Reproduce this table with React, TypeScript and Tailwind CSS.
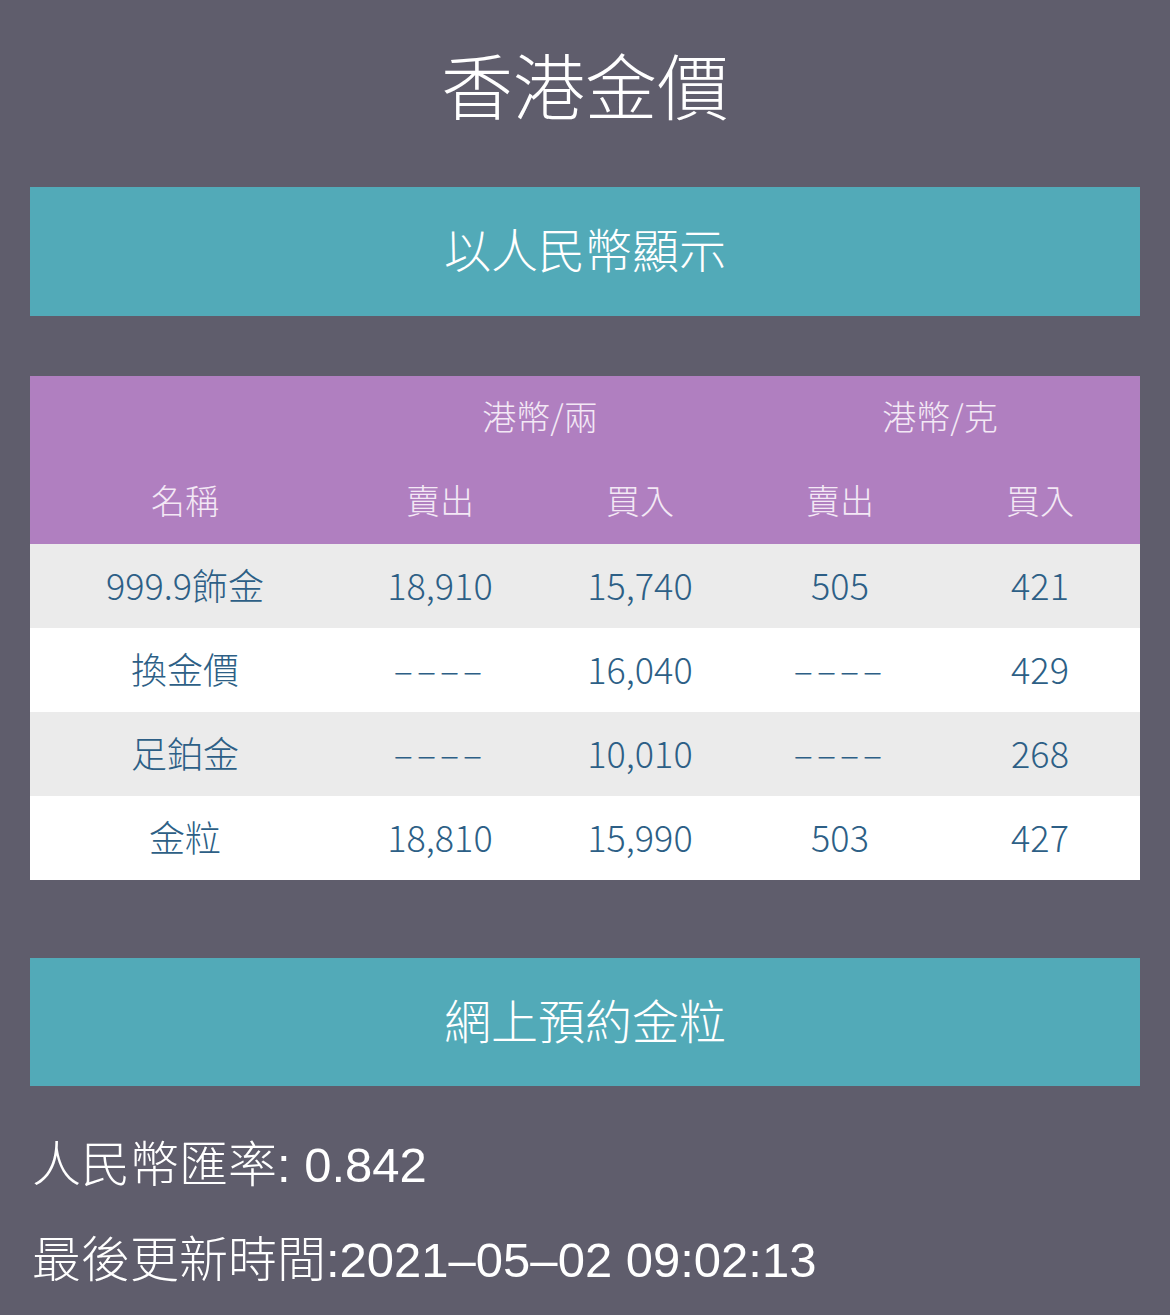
import React from "react";

const F = { fontFamily: '"Noto Sans CJK TC", "Noto Sans CJK SC", sans-serif' };
const FL = { fontFamily: '"Liberation Sans", "Noto Sans CJK TC", "Noto Sans CJK SC", sans-serif' };

type Row = { name: string; v: string[] };
const rows: Row[] = [
  { name: "999.9飾金", v: ["18,910", "15,740", "505", "421"] },
  { name: "換金價", v: ["----", "16,040", "----", "429"] },
  { name: "足鉑金", v: ["----", "10,010", "----", "268"] },
  { name: "金粒", v: ["18,810", "15,990", "503", "427"] },
];

function Cell({ children }: { children: React.ReactNode }) {
  return <div className="flex items-center justify-center pb-[4px]">{children}</div>;
}

export default function App() {
  return (
    <div className="min-h-[1315px] w-full bg-[#5f5d6c] px-[30px]" style={F}>
      <div className="flex h-[187px] items-center justify-center pb-[22px] text-[72px] font-light leading-none text-white">
        香港金價
      </div>
      <div className="flex h-[129px] items-center justify-center bg-[#52aab8] pb-[8px] text-[47px] font-light leading-none text-white">
        以人民幣顯示
      </div>
      <div className="mt-[60px]">
        <div className="grid h-[168px] grid-cols-[310px_400px_400px] grid-rows-2 bg-[#b07fc0] text-[34px] font-light leading-none text-[#f3e8f5]">
          <div />
          <Cell>港幣/兩</Cell>
          <Cell>港幣/克</Cell>
          <div className="col-span-3 grid grid-cols-[310px_200px_200px_200px_200px]">
            <Cell>名稱</Cell>
            <Cell>賣出</Cell>
            <Cell>買入</Cell>
            <Cell>賣出</Cell>
            <Cell>買入</Cell>
          </div>
        </div>
        {rows.map((r, i) => (
          <div
            key={r.name}
            className={`grid h-[84px] grid-cols-[310px_200px_200px_200px_200px] text-[36px] font-light leading-none text-[#2d5f86] ${
              i % 2 === 0 ? "bg-[#ebebeb]" : "bg-white"
            }`}
          >
            <Cell>{r.name}</Cell>
            {r.v.map((x, j) => (
              <Cell key={j}>
                {x === "----" ? (
                  <span className="tracking-[4px]">––––</span>
                ) : (
                  x
                )}
              </Cell>
            ))}
          </div>
        ))}
      </div>
      <div className="mt-[78px] flex h-[128px] items-center justify-center bg-[#52aab8] pb-[8px] text-[47px] font-light leading-none text-white">
        網上預約金粒
      </div>
      <div className="pt-[55px] pl-[2px] text-[49px] font-light leading-none text-white" style={FL}>
        <div className="h-[95px]">人民幣匯率: 0.842</div>
        <div>最後更新時間:2021–05–02 09:02:13</div>
      </div>
    </div>
  );
}
